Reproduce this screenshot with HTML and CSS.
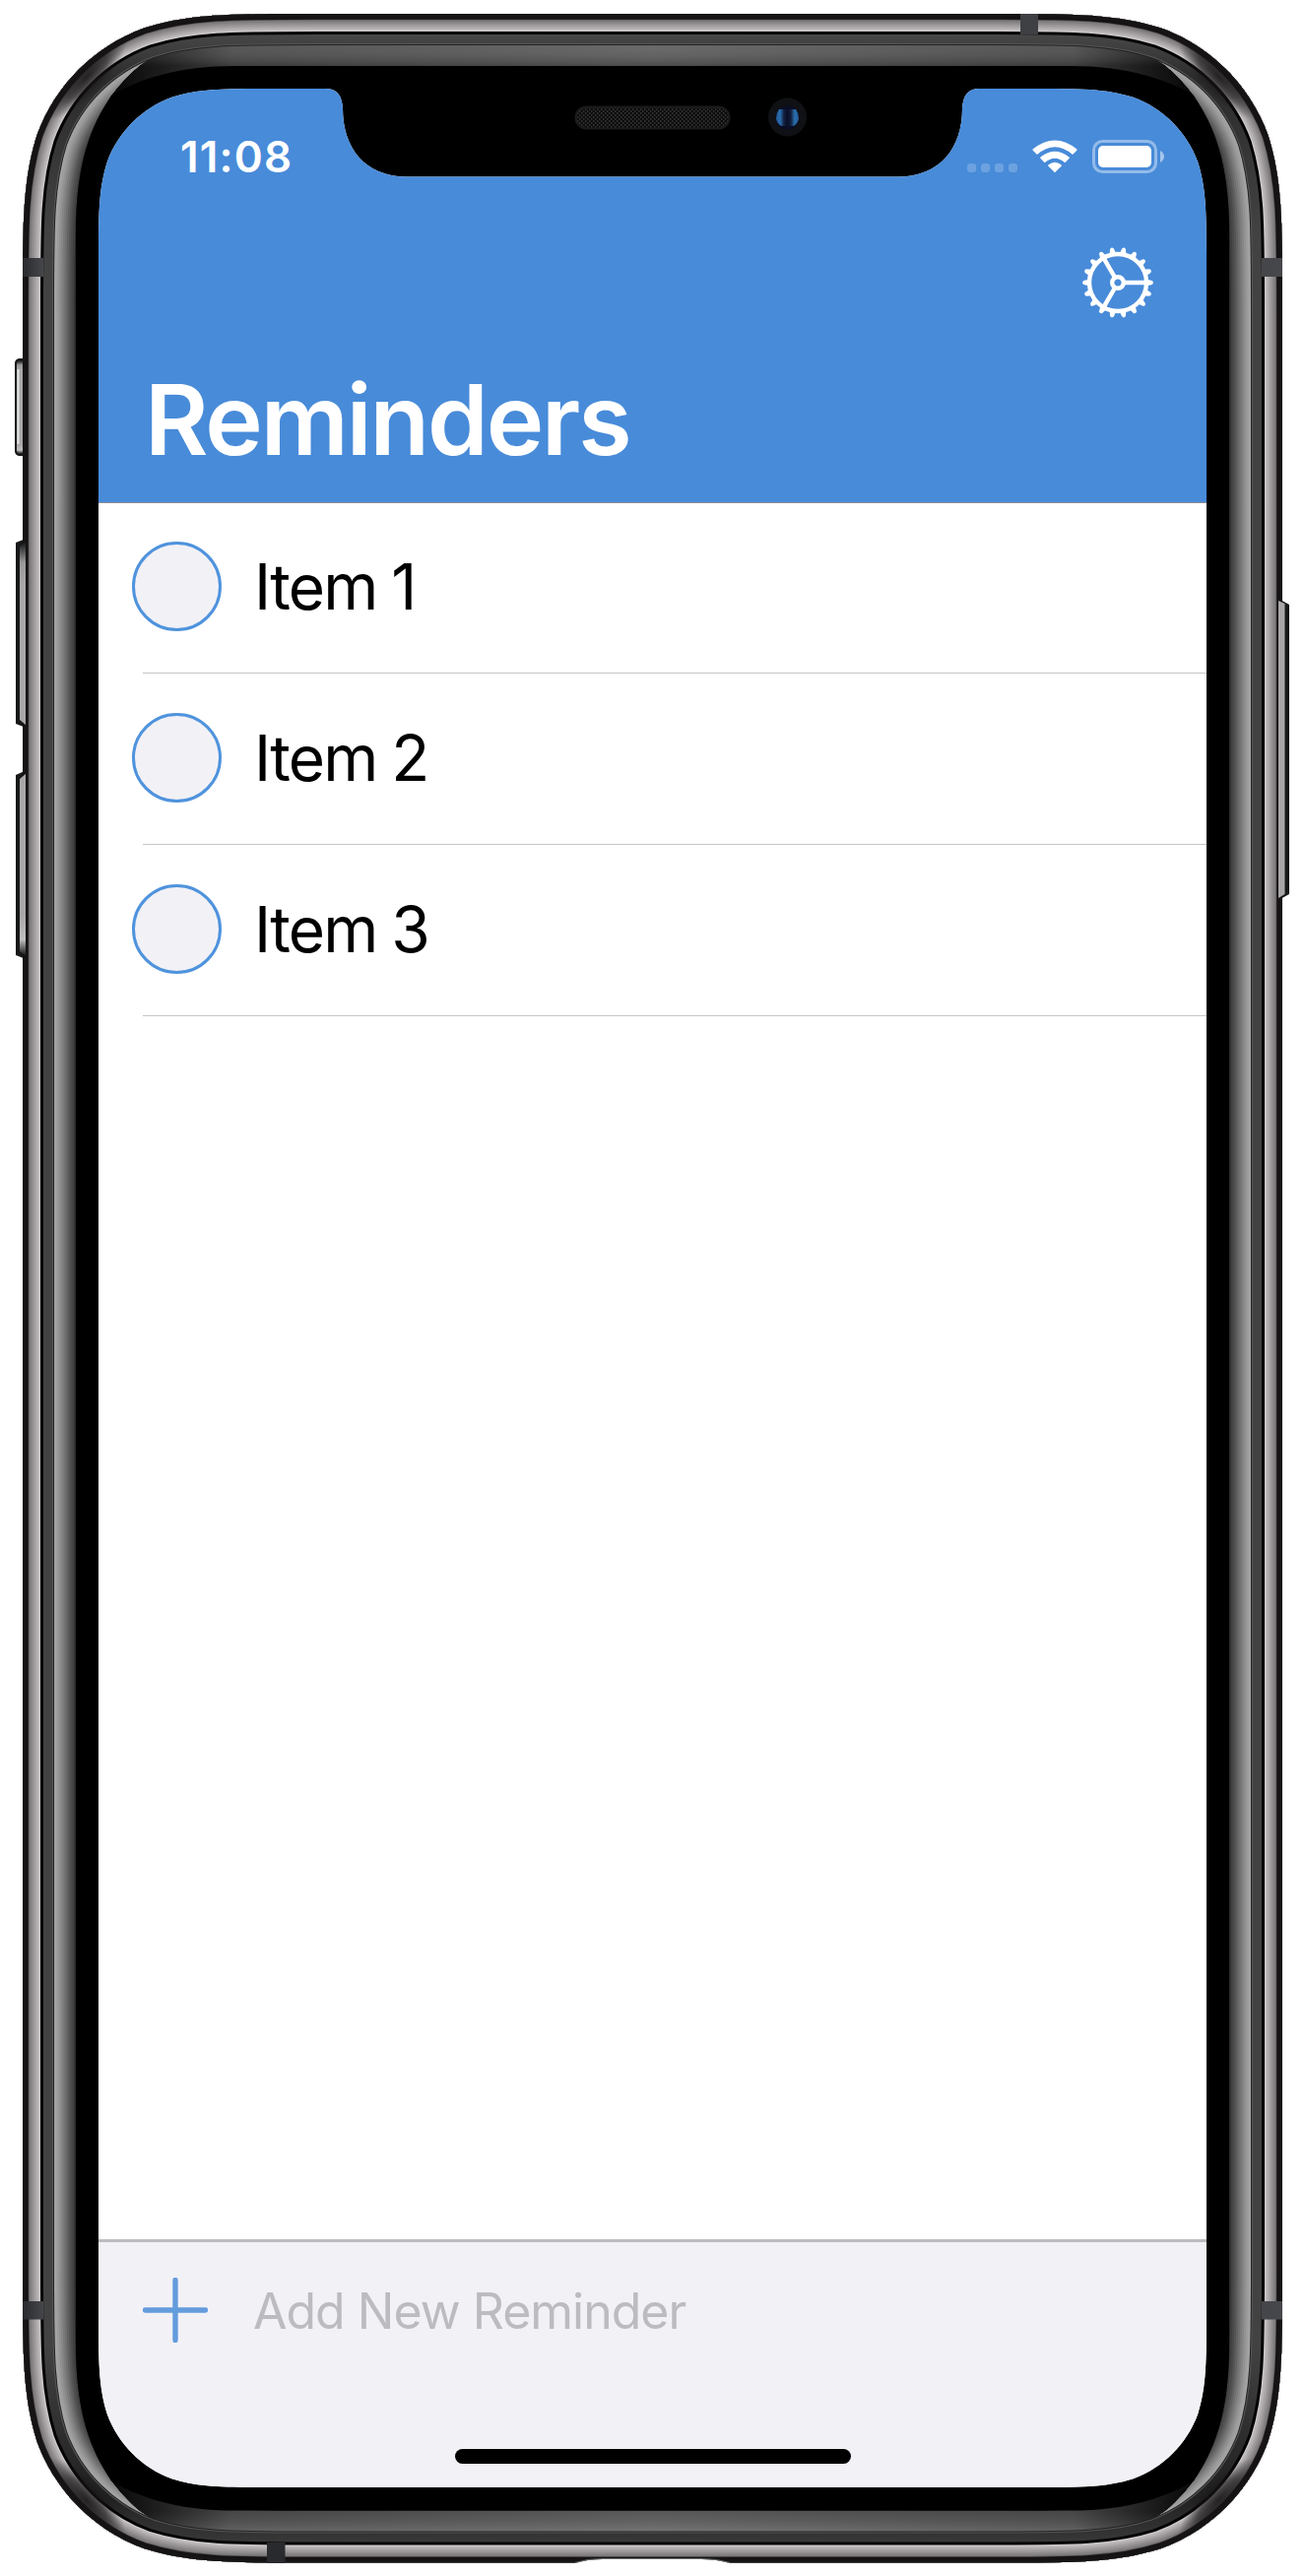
FILE: index.html
```html
<!DOCTYPE html>
<html lang="en">
<head>
<meta charset="utf-8">
<title>Reminders</title>
<link rel="stylesheet" href="styles.css">
</head>
<body>
<div class="phone">
  <svg class="frame" viewBox="0 0 1325 2616" width="1325" height="2616" aria-hidden="true">
    <defs>
      <path id="body" d="M321 14H1004C1089.7 14 1132.7 14 1178.9 28.6C1229.3 47 1269 86.7 1287.4 137.1C1302 183.3 1302 226.3 1302 312V2304.6C1302 2390.3 1302 2433.3 1287.4 2479.5C1269 2529.9 1229.3 2569.6 1178.9 2588C1132.7 2602.6 1089.7 2602.6 1004 2602.6H321C235.3 2602.6 192.3 2602.6 146.1 2588C95.7 2569.6 56 2529.9 37.6 2479.5C23 2433.3 23 2390.3 23 2304.6V312C23 226.3 23 183.3 37.6 137.1C56 86.7 95.7 47 146.1 28.6C192.3 14 235.3 14 321 14Z"/>
      <clipPath id="inside"><use href="#body"/></clipPath>
      <clipPath id="sides">
        <path d="M0 0H240L142 66Q126 79 112 98L300 400V2216L112 2518.600Q126 2537.600 142 2550.600L240 2616H0ZM1325 0H1085L1183 66Q1199 79 1213 98L1025 400V2216L1213 2518.600Q1199 2537.600 1183 2550.600L1085 2616H1325Z"/>
      </clipPath>
      <linearGradient id="capX" gradientUnits="userSpaceOnUse" x1="100" x2="1225" y1="0" y2="0">
        <stop offset="0" stop-color="#000"/><stop offset=".035" stop-color="#161616"/><stop offset=".12" stop-color="#4c4c4c"/><stop offset=".5" stop-color="#606060"/><stop offset=".88" stop-color="#4c4c4c"/><stop offset=".965" stop-color="#161616"/><stop offset="1" stop-color="#000"/>
      </linearGradient>
      <linearGradient id="shadeY" gradientUnits="userSpaceOnUse" x1="0" x2="0" y1="45" y2="2572">
        <stop offset="0" stop-color="#fff" stop-opacity=".05"/><stop offset=".0085" stop-color="#000" stop-opacity=".2"/><stop offset=".9913" stop-color="#000" stop-opacity=".08"/><stop offset="1" stop-color="#fff" stop-opacity=".14"/>
      </linearGradient>
      <radialGradient id="dim">
        <stop offset="0" stop-color="#181617" stop-opacity=".9"/><stop offset=".5" stop-color="#181617" stop-opacity=".65"/><stop offset="1" stop-color="#181617" stop-opacity="0"/>
      </radialGradient>
      <linearGradient id="darkY" gradientUnits="userSpaceOnUse" x1="0" x2="0" y1="30" y2="2586">
        <stop offset="0" stop-color="#4a4a4a"/><stop offset=".02" stop-color="#2b2b2b"/><stop offset=".08" stop-color="#424242"/><stop offset=".92" stop-color="#424242"/><stop offset=".98" stop-color="#202020"/><stop offset="1" stop-color="#3a3a3a"/>
      </linearGradient>
      <linearGradient id="btn" x1="0" x2="0" y1="0" y2="1">
        <stop offset="0" stop-color="#111"/><stop offset=".05" stop-color="#999"/><stop offset=".1" stop-color="#aaa7a8"/><stop offset=".9" stop-color="#aaa7a8"/><stop offset=".96" stop-color="#c0c0c0"/><stop offset="1" stop-color="#111"/>
      </linearGradient>
      <linearGradient id="antenna" x1="0" x2="1" y1="0" y2="0">
        <stop offset="0" stop-color="#282a2e"/><stop offset="1" stop-color="#45474a"/>
      </linearGradient>
      <linearGradient id="lens" x1="0" x2="1" y1="0" y2="0">
        <stop offset="0" stop-color="#235a94"/><stop offset=".18" stop-color="#2a6eae"/><stop offset=".34" stop-color="#13213f"/><stop offset=".5" stop-color="#090d25"/><stop offset=".66" stop-color="#13213f"/><stop offset=".82" stop-color="#2a6eae"/><stop offset="1" stop-color="#235a94"/>
      </linearGradient>
      <pattern id="mesh" width="4" height="4" patternUnits="userSpaceOnUse">
        <rect width="4" height="4" fill="#0c0c0c"/><path d="M0 0H1.500V2H0ZM2 2H3.500V4H2Z" fill="#303030"/>
      </pattern>
    </defs>

    <!-- side buttons -->
    <path class="edge" d="M25 364H19Q15 365 15 369V458Q15 462 19 463H25Z"/>
    <path d="M17 371Q17 366 20 366H25V461H20Q17 461 17 456Z" fill="url(#btn)"/>
    <path d="M17.500 375h2v76h-2Z" fill="#e4e6e7"/>
    <path class="edge" d="M25 547.500L16 551V735L25 738.500ZM25 783L16 787V970L25 973.500ZM1300 609L1309 614V908L1300 913Z"/>

    <use href="#body" class="shell"/>
    <g clip-path="url(#inside)" fill="none">
      <use href="#body" stroke="url(#capX)" stroke-width="106"/>
      <use href="#body" stroke="url(#shadeY)" stroke-width="106"/>
      <g clip-path="url(#sides)">
        <use href="#body" stroke="#2b2b2b" stroke-width="108"/>
        <use href="#body" stroke="#404040" stroke-width="105"/>
        <use href="#body" stroke="#4a4a4a" stroke-width="101"/>
        <use href="#body" stroke="#555" stroke-width="97"/>
        <use href="#body" stroke="#626262" stroke-width="93"/>
        <use href="#body" stroke="#6f6f6f" stroke-width="89"/>
        <use href="#body" stroke="#7b7b7b" stroke-width="85"/>
        <use href="#body" stroke="#878787" stroke-width="81"/>
        <use href="#body" stroke="#929292" stroke-width="77"/>
        <use href="#body" stroke="#9c9c9c" stroke-width="73"/>
        <use href="#body" stroke="#a2a2a2" stroke-width="69"/>
      </g>
      <path class="glass" d="M240 67H1085C1145 67 1183 80 1212 97C1233 128 1248 165 1248 235V2381.600C1248 2451.600 1233 2488.600 1212 2519.600C1183 2536.600 1145 2549.600 1085 2549.600H240C180 2549.600 142 2536.600 113 2519.600C92 2488.600 77 2451.600 77 2381.600V235C77 165 92 128 113 97C142 80 180 67 240 67Z"/>
      <use href="#body" stroke="#222" stroke-width="64"/>
      <use href="#body" stroke="#555" stroke-width="62"/>
      <use href="#body" stroke="url(#darkY)" stroke-width="60"/>
      <use href="#body" stroke="#050303" stroke-width="42"/>
      <use href="#body" stroke="#ccc9cb" stroke-width="36"/>
      <use href="#body" stroke="#b9b5b7" stroke-width="33"/>
      <use href="#body" stroke="#aaa6a8" stroke-width="29"/>
      <use href="#body" stroke="#9c989a" stroke-width="25"/>
      <use href="#body" stroke="#8e8a8c" stroke-width="21"/>
      <use href="#body" stroke="#807c7e" stroke-width="17"/>
      <use href="#body" stroke="#555253" stroke-width="13"/>
      <g stroke="none" fill="url(#dim)">
        <ellipse cx="88" cy="78" rx="18" ry="56" transform="rotate(43 88 78)"/>
        <ellipse cx="1237" cy="78" rx="18" ry="56" transform="rotate(-43 1237 78)"/>
        <ellipse cx="88" cy="2539" rx="18" ry="56" transform="rotate(-43 88 2539)"/>
        <ellipse cx="1237" cy="2539" rx="18" ry="56" transform="rotate(43 1237 2539)"/>
      </g>
      <use href="#body" stroke="#151314" stroke-width="11.500"/>
    </g>

    <path d="M20 555L26 550V736L20 731ZM20 791L26 786V971L20 966ZM1304.500 613L1298 610V912L1304.500 908Z" fill="url(#btn)"/>

    <!-- antenna bands -->
    <g fill="url(#antenna)">
      <path d="M23 262H44V281H23ZM23 2337H44V2355.500H23Z"/>
      <path d="M1281 262H1302V281H1281ZM1281 2337H1302V2355.500H1281ZM1036 14H1054V35H1036ZM271 2582H289.500V2603H271Z"/>
    </g>

    <path d="M584 2603Q596 2599 612 2599H712Q728 2599 741 2603Z" fill="#fff"/>
    <path d="M584 2602.500Q596 2598.500 612 2598.500H712Q728 2598.500 741 2602.500" fill="none" stroke="#777" stroke-width="1"/>

    <!-- earpiece and camera -->
    <rect x="584.500" y="108.500" width="156" height="22" rx="11" fill="url(#mesh)" stroke="#1b1b1b" stroke-width="2"/>
    <circle cx="799.500" cy="119" r="19.500" fill="#101114"/>
    <circle cx="799.500" cy="119.500" r="12" fill="#0a0d26"/>
    <path d="M791 111H808Q811 115 811 120Q811 124 806 128H793Q788 124 788 120Q788 115 791 111Z" fill="url(#lens)"/>
  </svg>

  <main class="screen">
    <header class="nav">
      <div class="status">
        <span class="time">11:08</span>
        <div class="indicators">
          <span class="signal"><i></i><i></i><i></i><i></i></span>
          <svg class="wifi" viewBox="0 0 46 34" width="46" height="34" aria-hidden="true">
            <path d="M23 33.300L16.200 26.500Q15.900 25.800 16.600 25.200Q23 20.200 29.400 25.200Q30.100 25.800 29.800 26.500Z"/>
            <path d="M12.700 23.200L8.300 18.800Q7.900 18.200 8.500 17.600Q23 5.800 37.500 17.600Q38.100 18.200 37.700 18.800L33.300 23.200Q23 14.200 12.700 23.200Z"/>
            <path d="M5 15L.5 10.600Q.1 10 .6 9.500Q23-8.600 45.400 9.500Q45.900 10 45.500 10.600L41 15Q23-.6 5 15Z"/>
          </svg>
          <svg class="battery" viewBox="0 0 74 34" width="74" height="34" aria-hidden="true">
            <rect x="1.500" y="1.500" width="63" height="31" rx="9" fill="none" stroke="#fff" stroke-opacity=".42" stroke-width="3"/>
            <rect x="6" y="6" width="54" height="22" rx="5"/>
            <path d="M69 11Q73 13.500 73 17T69 23Z" fill-opacity=".5"/>
          </svg>
        </div>
      </div>
      <button class="settings" aria-label="Settings">
        <svg viewBox="-36 -36 72 72" width="72" height="72" aria-hidden="true">
          <defs>
            <path id="tooth" d="M-3.600-28.500L-1.900-34.800Q0-37 1.900-34.800L3.600-28.500Z"/>
            <g id="arc">
              <use href="#tooth" transform="rotate(10)"/><use href="#tooth" transform="rotate(30)"/><use href="#tooth" transform="rotate(50)"/>
            </g>
          </defs>
          <g class="teeth">
            <use href="#arc"/><use href="#arc" transform="rotate(60)"/><use href="#arc" transform="rotate(120)"/>
            <use href="#arc" transform="rotate(180)"/><use href="#arc" transform="rotate(240)"/><use href="#arc" transform="rotate(300)"/>
          </g>
          <g class="wheel"><circle r="29"/><circle r="5.800"/><path d="M7 0H28M-3.500-6.100L-14-24.200M-3.500 6.100L-14 24.200"/></g>
        </svg>
      </button>
      <h1 class="title">Reminders</h1>
    </header>

    <ul class="list">
      <li class="row"><span class="check"></span><span class="label">Item 1</span></li>
      <li class="row"><span class="check"></span><span class="label">Item 2</span></li>
      <li class="row"><span class="check"></span><span class="label">Item 3</span></li>
    </ul>

    <footer class="toolbar">
      <div class="add">
        <svg class="plus" viewBox="0 0 66 66" width="66" height="66" aria-hidden="true"><path d="M33 2.500V63.500M2.500 33H63.500"/></svg>
        <span class="placeholder">Add New Reminder</span>
      </div>
      <div class="home"></div>
    </footer>
  </main>
</div>
</body>
</html>
```

FILE: styles.css
```css
* { box-sizing: border-box; }

body {
  margin: 0;
  background: #fff;
  font-family: Inter, "Liberation Sans", sans-serif;
}

.phone {
  display: grid;
  width: 1325px;
  height: 2616px;
}

.frame, .screen { grid-area: 1 / 1; }
.frame { display: block; }
.shell, .glass { fill: #000; }
.edge { fill: #171819; }

.screen {
  display: flex;
  flex-direction: column;
  width: 1125px;
  height: 2436px;
  margin: 90px 100px;
  background: #fff;
  clip-path: path("M180.4 0H230C243 0 247 7 248 20C248 60 270 89.5 314 89.5H811C855 89.5 877 60 877 20C878 7 882 0 895 0H944.6C996.6 0 1022.5 0 1050.5 8.8C1081 19.9 1105.1 44 1116.2 74.5C1125 102.5 1125 128.4 1125 180.4V2255.6C1125 2307.6 1125 2333.5 1116.2 2361.5C1105.1 2392 1081 2416.1 1050.5 2427.2C1022.5 2436 996.6 2436 944.6 2436H180.4C128.4 2436 102.5 2436 74.5 2427.2C44 2416.1 19.9 2392 8.8 2361.5C0 2333.5 0 2307.6 0 2255.6V180.4C0 128.4 0 102.5 8.8 74.5C19.9 44 44 19.9 74.5 8.8C102.5 0 128.4 0 180.4 0Z");
}

.nav {
  display: flex;
  flex-direction: column;
  height: 421px;
  border-bottom: 1px solid #8e8c96;
  background: #488bd9;
  color: #fff;
}

.status {
  display: flex;
  justify-content: space-between;
  height: 132px;
  padding: 43px 42px 0 83px;
}

.time {
  font-size: 44px;
  font-weight: 600;
  line-height: 52px;
  letter-spacing: 1.2px;
}

.indicators {
  display: flex;
  height: 34px;
  margin-top: 9px;
  fill: #fff;
}

.signal {
  display: flex;
  align-items: flex-end;
  gap: 5px;
  margin-right: 15px;
  padding-bottom: 1px;
}

.signal i {
  width: 9px;
  height: 9px;
  border-radius: 3px;
  background: rgba(255, 255, 255, .2);
}

.wifi { margin-right: 15px; }

.settings {
  align-self: flex-end;
  width: 72px;
  height: 72px;
  margin: 29px 54px 0 0;
  padding: 0;
  border: 0;
  background: none;
}

.settings svg { display: block; }
.teeth { fill: #fff; }
.wheel { fill: none; stroke: #fff; stroke-width: 4.4; }

.title {
  margin: 43px 0 0 47px;
  font-size: 99px;
  font-weight: 600;
  line-height: 120px;
  letter-spacing: -2.1px;
  white-space: nowrap;
}

.list {
  flex: 1;
  margin: 0;
  padding: 0;
  list-style: none;
}

.row {
  display: flex;
  align-items: center;
  height: 174px;
  padding: 0 0 5px 34px;
  background: linear-gradient(#c6c6c8, #c6c6c8) 45px 172px / 1080px 1px no-repeat;
}

.check {
  width: 91px;
  height: 91px;
  border: 3px solid #4f93dd;
  border-radius: 50%;
  background: #f2f1f6;
}

.label {
  margin-left: 33px;
  font-size: 64px;
  line-height: 80px;
  letter-spacing: -1.8px;
  word-spacing: -1.5px;
  color: #000;
}

.toolbar {
  display: flex;
  flex-direction: column;
  justify-content: space-between;
  align-items: center;
  height: 252px;
  padding: 36px 0 24px;
  border-top: 3px solid #bcbbc0;
  background: #f2f1f6;
}

.add {
  display: flex;
  align-items: center;
  width: 100%;
  padding-left: 45px;
}

.plus {
  fill: none;
  stroke: #639cdd;
  stroke-width: 5.4;
  stroke-linecap: round;
}

.placeholder {
  margin-left: 46px;
  padding-top: 2px;
  font-size: 50px;
  line-height: 60px;
  letter-spacing: -1px;
  color: #bcbbc0;
}

.home {
  width: 402px;
  height: 15px;
  border-radius: 8px;
  background: #000;
}
```
